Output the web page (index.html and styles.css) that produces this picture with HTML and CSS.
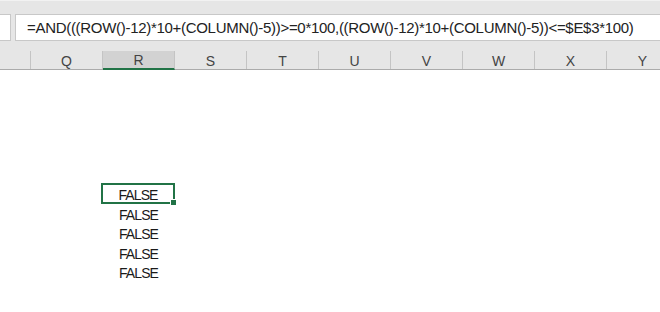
FILE: index.html
```html
<!DOCTYPE html>
<html>
<head>
    <meta charset="UTF-8">
    <title>Sheet</title>
    <link rel="stylesheet" href="styles.css">
</head>
<body>
    <div class="formula-row">
        <div class="name-box"></div>
        <div class="formula-box">=AND(((ROW()-12)*10+(COLUMN()-5))&gt;=0*100,((ROW()-12)*10+(COLUMN()-5))&lt;=$E$3*100)</div>
    </div>

    <div class="header-row">
        <div class="col-head stub"></div>
        <div class="col-head">Q</div>
        <div class="col-head active">R</div>
        <div class="col-head">S</div>
        <div class="col-head">T</div>
        <div class="col-head">U</div>
        <div class="col-head">V</div>
        <div class="col-head">W</div>
        <div class="col-head">X</div>
        <div class="col-head">Y</div>
    </div>

    <div class="grid">
        <div class="cells">
            <div class="cell selected">FALSE<span class="handle"></span></div>
            <div class="cell">FALSE</div>
            <div class="cell">FALSE</div>
            <div class="cell">FALSE</div>
            <div class="cell">FALSE</div>
        </div>
    </div>
</body>
</html>
```

FILE: styles.css
```css
body {
    margin: 0;
    width: 660px;
    height: 312px;
    overflow: hidden;
    background: #fff;
    font-family: "Liberation Sans", "Noto Sans CJK SC", sans-serif;
    color: #222;
}
.formula-row {
    display: flex;
    gap: 4px;
    height: 51px;
    box-sizing: border-box;
    padding: 13px 0 10px;
    background: #e6e6e6;
    border-top: 1px solid #f2f2f2;
}
.name-box {
    width: 10px;
    background: #fff;
    border: 1px solid #c8c8c8;
    border-left: none;
}
.formula-box {
    flex: 1;
    background: #fff;
    border: 1px solid #c8c8c8;
    border-right: none;
    padding-left: 11px;
    font-size: 15px;
    letter-spacing: -0.3px;
    line-height: 26px;
    white-space: nowrap;
    overflow: hidden;
    color: #222;
}
.header-row {
    display: flex;
    height: 18px;
    background: #e6e6e6;
    border-bottom: 1px solid #ababab;
}
.col-head {
    flex: none;
    width: 72px;
    box-sizing: border-box;
    border-right: 1px solid #c4c4c4;
    text-align: center;
    font-size: 14px;
    line-height: 20px;
    color: #444;
}
.col-head.stub {
    width: 31px;
}
.col-head.active {
    background: #d2d2d2;
    border-bottom: 2px solid #217346;
    line-height: 18px;
    height: 19px;
    margin-bottom: -1px;
}
.grid {
    padding: 114px 0 0 102px;
}
.cells {
    width: 73px;
}
.cell {
    position: relative;
    height: 19.25px;
    font-size: 14px;
    letter-spacing: -0.9px;
    line-height: 24px;
    text-align: center;
    box-sizing: border-box;
    color: #1a1a1a;
}
.cell.selected {
    border: 2px solid #217346;
    line-height: 20px;
    height: 21px;
    margin-top: -1px;
    margin-bottom: -1px;
    width: 74px;
    margin-left: -1px;
}
.handle {
    position: absolute;
    right: -4px;
    bottom: -4px;
    width: 5px;
    height: 5px;
    background: #217346;
    border: 1px solid #fff;
}
```
